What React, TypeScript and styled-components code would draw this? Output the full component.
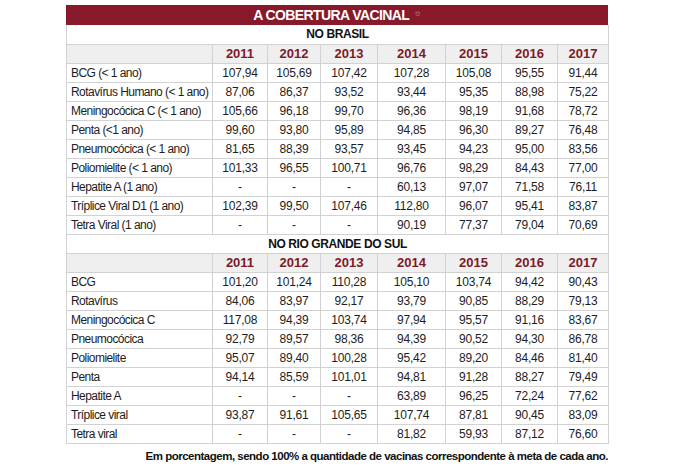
import React from "react";
import styled, { createGlobalStyle } from "styled-components";

const Global = createGlobalStyle`
  html, body { margin: 0; padding: 0; background: #ffffff; }
  body { font-family: "Liberation Sans", Arial, sans-serif; }
`;

const Page = styled.div`
  width: 700px;
  height: 466px;
  padding: 5px 0 0 66px;
  box-sizing: border-box;
`;

const Frame = styled.div`
  width: 542px;
`;

const TitleBar = styled.div`
  height: 20px;
  background: #87192a;
  color: #ffffff;
  display: flex;
  align-items: center;
  justify-content: center;
  font-weight: 700;
  font-size: 14px;
  letter-spacing: -0.6px;
`;

const Star = styled.span`
  color: #e3a9b2;
  font-size: 9px;
  margin-left: 4px;
  align-self: flex-start;
  margin-top: 3px;
`;

const Table = styled.table`
  width: 542px;
  border-collapse: collapse;
  table-layout: fixed;
  font-size: 12px;
  color: #1d1d1d;
`;

const Row = styled.tr`
  height: 19px;
`;

const SectionCell = styled.td`
  border: 1px solid #d2d2d2;
  border-top: none;
  padding: 0;
  text-align: center;
  font-weight: 700;
  font-size: 12px;
  letter-spacing: -0.4px;
  color: #111;
  line-height: 18px;
`;

const YearCell = styled.th`
  border: 1px solid #d2d2d2;
  background: #efefef;
  padding: 0;
  text-align: center;
  font-weight: 700;
  font-size: 13px;
  color: #7d1a26;
  line-height: 18px;
`;

const LabelCell = styled.td`
  border: 1px solid #d2d2d2;
  padding: 0 0 0 4px;
  text-align: left;
  white-space: nowrap;
  overflow: hidden;
  letter-spacing: -0.55px;
  line-height: 18px;
`;

const NumCell = styled.td`
  border: 1px solid #d2d2d2;
  padding: 0;
  text-align: center;
  line-height: 18px;
  letter-spacing: -0.2px;
`;

const Note = styled.div`
  margin-top: 6px;
  text-align: right;
  font-weight: 700;
  font-size: 11.5px;
  letter-spacing: -0.5px;
  color: #111;
`;

const widths = [146, 55, 53, 57, 68, 56, 56, 51];
const years = ["2011", "2012", "2013", "2014", "2015", "2016", "2017"];

type DataRow = [string, ...string[]];

const brasil: DataRow[] = [
  ["BCG (< 1 ano)", "107,94", "105,69", "107,42", "107,28", "105,08", "95,55", "91,44"],
  ["Rotavírus Humano (< 1 ano)", "87,06", "86,37", "93,52", "93,44", "95,35", "88,98", "75,22"],
  ["Meningocócica C (< 1 ano)", "105,66", "96,18", "99,70", "96,36", "98,19", "91,68", "78,72"],
  ["Penta (<1 ano)", "99,60", "93,80", "95,89", "94,85", "96,30", "89,27", "76,48"],
  ["Pneumocócica (< 1 ano)", "81,65", "88,39", "93,57", "93,45", "94,23", "95,00", "83,56"],
  ["Poliomielite (< 1 ano)", "101,33", "96,55", "100,71", "96,76", "98,29", "84,43", "77,00"],
  ["Hepatite A (1 ano)", "-", "-", "-", "60,13", "97,07", "71,58", "76,11"],
  ["Tríplice Viral  D1 (1 ano)", "102,39", "99,50", "107,46", "112,80", "96,07", "95,41", "83,87"],
  ["Tetra Viral (1 ano)", "-", "-", "-", "90,19", "77,37", "79,04", "70,69"],
];

const rs: DataRow[] = [
  ["BCG", "101,20", "101,24", "110,28", "105,10", "103,74", "94,42", "90,43"],
  ["Rotavírus", "84,06", "83,97", "92,17", "93,79", "90,85", "88,29", "79,13"],
  ["Meningocócica C", "117,08", "94,39", "103,74", "97,94", "95,57", "91,16", "83,67"],
  ["Pneumocócica", "92,79", "89,57", "98,36", "94,39", "90,52", "94,30", "86,78"],
  ["Poliomielite", "95,07", "89,40", "100,28", "95,42", "89,20", "84,46", "81,40"],
  ["Penta", "94,14", "85,59", "101,01", "94,81", "91,28", "88,27", "79,49"],
  ["Hepatite A", "-", "-", "-", "63,89", "96,25", "72,24", "77,62"],
  ["Tríplice viral", "93,87", "91,61", "105,65", "107,74", "87,81", "90,45", "83,09"],
  ["Tetra viral", "-", "-", "-", "81,82", "59,93", "87,12", "76,60"],
];

function Section({ title, rows }: { title: string; rows: DataRow[] }) {
  return (
    <>
      <Row>
        <SectionCell colSpan={8}>{title}</SectionCell>
      </Row>
      <Row>
        <YearCell />
        {years.map((y) => (
          <YearCell key={y}>{y}</YearCell>
        ))}
      </Row>
      {rows.map((r) => (
        <Row key={r[0]}>
          <LabelCell>{r[0]}</LabelCell>
          {r.slice(1).map((v, i) => (
            <NumCell key={i}>{v}</NumCell>
          ))}
        </Row>
      ))}
    </>
  );
}

export default function App() {
  return (
    <>
      <Global />
      <Page>
        <Frame>
          <TitleBar>
            A COBERTURA VACINAL<Star>☼</Star>
          </TitleBar>
          <Table>
            <colgroup>
              {widths.map((w, i) => (
                <col key={i} style={{ width: w }} />
              ))}
            </colgroup>
            <tbody>
              <Section title="NO BRASIL" rows={brasil} />
              <Section title="NO RIO GRANDE DO SUL" rows={rs} />
            </tbody>
          </Table>
          <Note>
            Em porcentagem, sendo 100% a quantidade de vacinas correspondente à meta de cada ano.
          </Note>
        </Frame>
      </Page>
    </>
  );
}
